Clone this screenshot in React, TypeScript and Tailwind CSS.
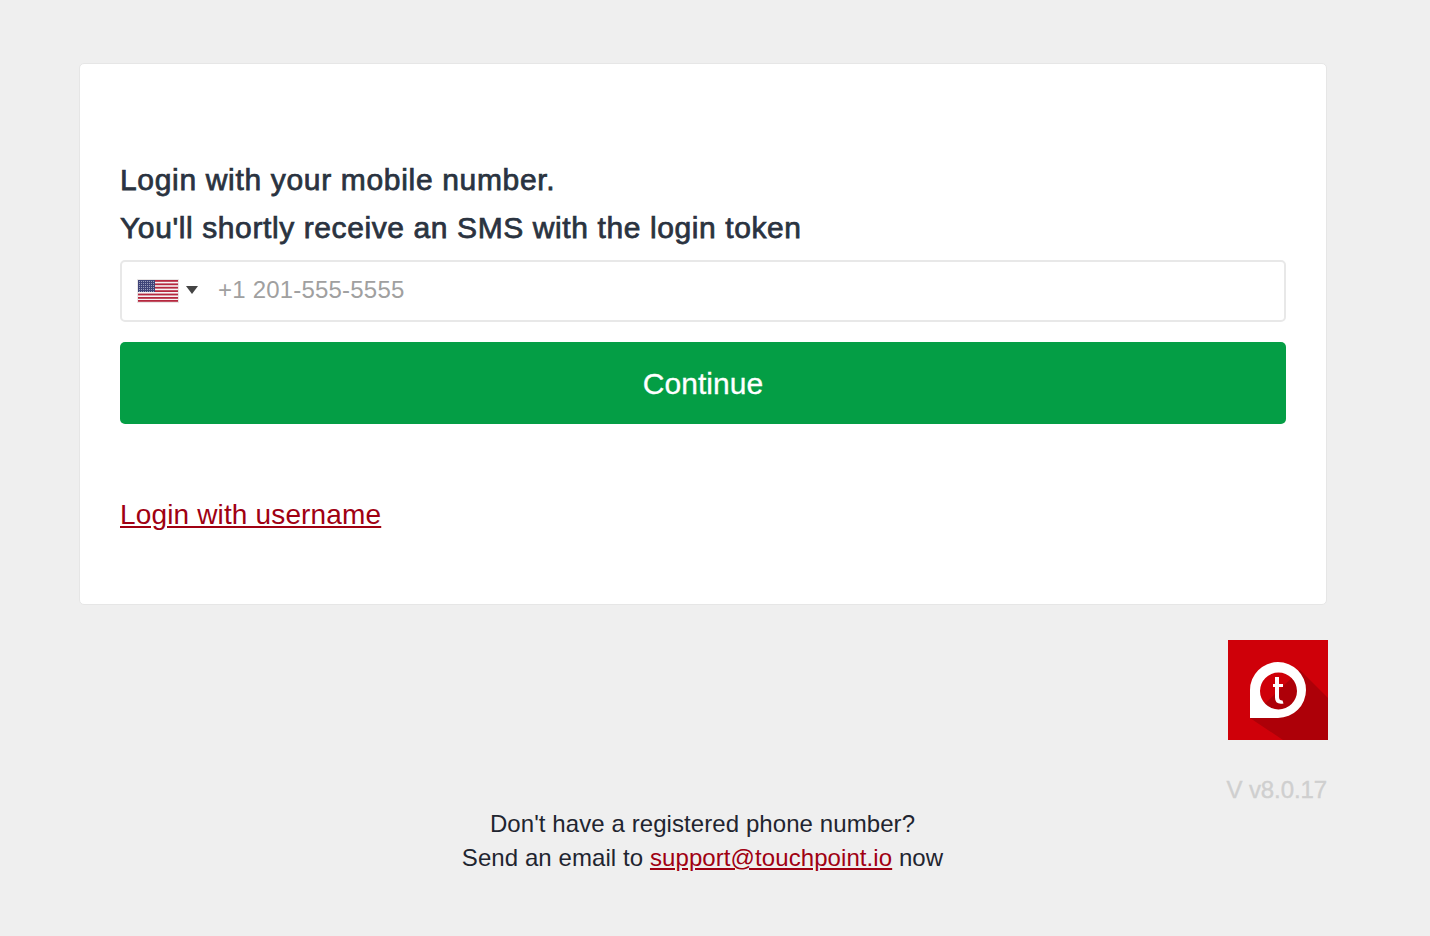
export default function App() {
  const dots: [number, number][] = [];
  for (let r = 0; r < 6; r++) {
    for (let c = 0; c < 8; c++) {
      dots.push([2.5 + c * 2, 2.4 + r * 2]);
    }
  }
  return (
    <div className="min-h-[936px] bg-[#efefef] font-['Liberation_Sans',Arial,sans-serif] text-[#212529] pt-[63px]">
      <div className="ml-[79px] w-[1249px]">
        <div className="w-[1248px] h-[542px] bg-white border border-[#e6e6e6] rounded-[5px] pt-[92px] px-[40px]">
          <h1 className="text-[30px] leading-[48px] tracking-[0.67px] text-[#2a3340] [-webkit-text-stroke:0.75px_#2a3340]">Login with your mobile number.</h1>
          <h2 className="text-[30px] leading-[48px] tracking-[0.6px] text-[#2a3340] [-webkit-text-stroke:0.75px_#2a3340]">You'll shortly receive an SMS with the login token</h2>
          <div className="mt-[8px] h-[62px] border-2 border-[#e8e8e8] rounded-[5px] flex items-center pl-[15px]">
            <svg width="42" height="24" viewBox="0 0 42 24" className="shrink-0">
              <rect width="42" height="24" fill="#e9e6e6" />
              <rect x="1" y="1" width="40" height="22" fill="#f6f4f4" />
              {[1, 4.4, 7.8, 11.2, 14.6, 18, 21].map((y) => (
                <rect key={y} x="1" y={y} width="40" height="1.8" fill="#b5283f" />
              ))}
              <rect x="1" y="1" width="17" height="12" fill="#3f4478" />
              {dots.map(([x, y]) => (
                <circle key={`${x}-${y}`} cx={x} cy={y} r="0.5" fill="#b9bbd2" />
              ))}
            </svg>
            <svg width="12" height="8" viewBox="0 0 12 8" className="ml-[7px] -mt-[2px] shrink-0">
              <path d="M0 0h12L6 8z" fill="#444" />
            </svg>
            <span className="ml-[20px] -mt-[2px] text-[24px] tracking-[0.2px] leading-none text-[#a0a0a0]">+1 201-555-5555</span>
          </div>
          <button className="mt-[20px] w-full h-[82px] bg-[#049e45] rounded-[5px] text-white text-[30px] tracking-[0.05px] [-webkit-text-stroke:0.3px_#fff]">Continue</button>
          <div className="mt-[69px]">
            <a className="text-[28px] tracking-[0.15px] leading-[44px] text-[#a00012] underline">Login with username</a>
          </div>
        </div>
        <div className="mt-[35px] flex flex-col items-end">
          <svg width="100" height="100" viewBox="0 0 100 100" className="block">
            <rect width="100" height="100" fill="#cf0009" />
            <path d="M22 78 L55 100 L100 100 L100 58 L72 30 Z" fill="#ad0008" />
            <path fillRule="evenodd" d="M22 78 V50 A28 28 0 1 1 50 78 Z M50.5 32.5 A18.5 18.5 0 1 0 50.5 69.5 A18.5 18.5 0 1 0 50.5 32.5 Z" fill="#fff" />
            <path d="M47 37 h4 v7 h4 v3 h-4 v10 q0 3.5 3.5 3.5 l1 3 q-8.5 1.5 -8.5 -6 v-10.5 h-2 v-3 h2 z" fill="#fff" />
          </svg>
          <div className="mt-[36px] mr-[1px] text-[24px] tracking-[-0.1px] leading-[28px] text-[#cfcfcf] whitespace-nowrap [-webkit-text-stroke:0.4px_#cfcfcf]">V v8.0.17</div>
        </div>
      </div>
      <div className="mt-[3px] text-center text-[24px] tracking-[0.08px] leading-[34px] text-[#1f2530] w-[1405px]">
        <div>Don't have a registered phone number?</div>
        <div>Send an email to <a className="text-[#a00012] underline">support@touchpoint.io</a> now</div>
      </div>
    </div>
  );
}
